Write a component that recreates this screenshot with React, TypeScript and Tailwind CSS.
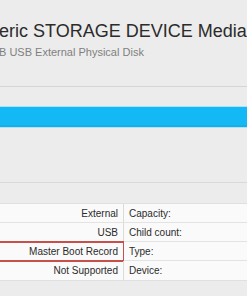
const rows = [
  { value: "External", label: "Capacity:" },
  { value: "USB", label: "Child count:" },
  { value: "Master Boot Record", label: "Type:", marked: true },
  { value: "Not Supported", label: "Device:" },
];

export default function App() {
  return (
    <div className="w-[247px] h-[296px] overflow-hidden bg-[#ececec] font-['Liberation_Sans',Arial,sans-serif] text-[#2b2b2b]">
      <div className="h-[86px] overflow-hidden pt-[20px]">
        <div className="whitespace-nowrap text-[18px] leading-[22px] -ml-[1px]">
          eric STORAGE DEVICE Media
        </div>
        <div className="whitespace-nowrap text-[11px] leading-[14px] mt-[3px] text-[#808080] -ml-[1px]">
          B USB External Physical Disk
        </div>
      </div>
      <div className="h-px bg-[#d5d5d5]" />

      <div className="mt-[19px] h-[22px] border-y border-[#a9e4f8] bg-[#13b8f5] flex flex-col justify-end">
        <div className="h-[2px] bg-[#1aaee2]" />
      </div>

      <div className="mt-[54px] h-px bg-[#d9d9d9]" />

      <div className="mt-[20px] bg-[#fafafa] border-y border-[#e0e0e0]">
        {rows.map((r, i) => (
          <div
            key={r.label}
            className={
              "flex h-[19px] text-[10px] " +
              (i < rows.length - 1 ? "border-b border-[#e3e3e3]" : "")
            }
          >
            <div
              className={
                "w-[124px] flex items-center justify-end pr-[5px] border-r " +
                (r.marked
                  ? "border-2 border-[#c8504a] -my-px h-[21px] -ml-[2px] w-[126px]"
                  : "border-[#dadada]")
              }
            >
              {r.value}
            </div>
            <div className="flex-1 flex items-center pl-[5px]">{r.label}</div>
          </div>
        ))}
      </div>
    </div>
  );
}
